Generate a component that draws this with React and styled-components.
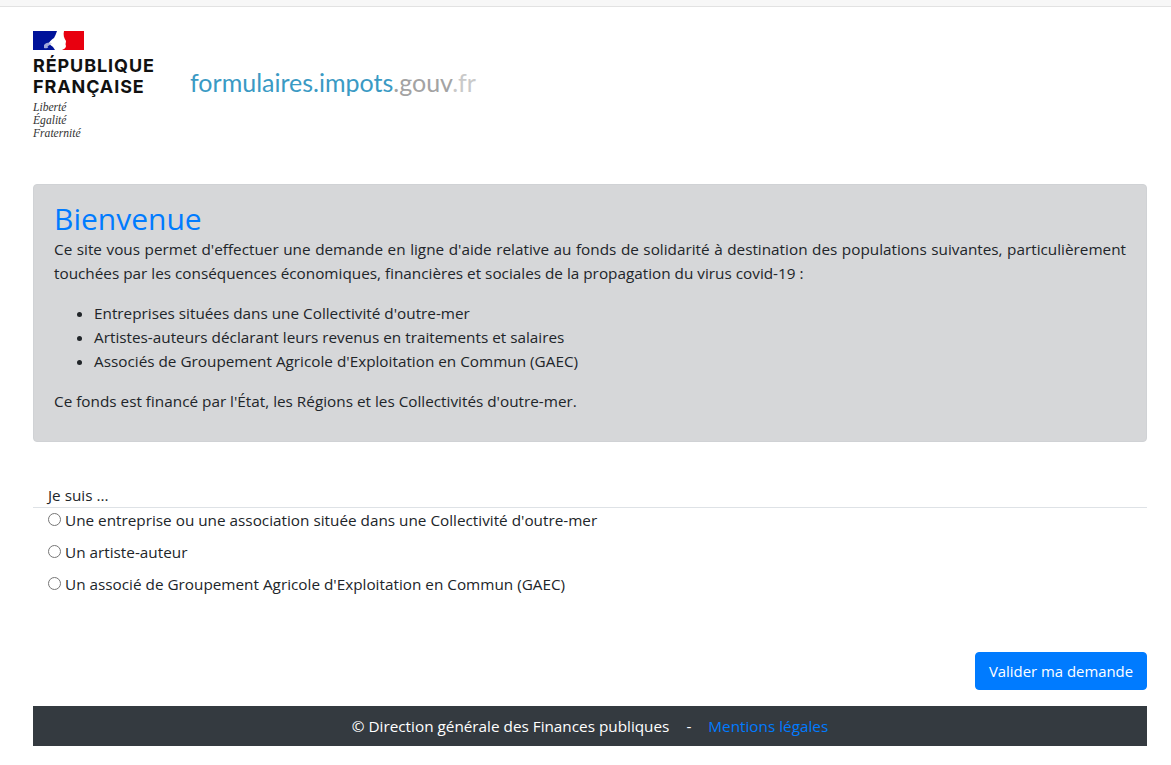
import React from 'react'
import styled, { createGlobalStyle } from 'styled-components'

const GlobalStyle = createGlobalStyle`
  * {
    box-sizing: border-box;
  }
  body {
    margin: 0;
    background: #fff;
    color: #212529;
    font-family: 'Open Sans', 'Noto Sans', sans-serif;
    font-size: 15.3px;
  }
`

const Flag = () => (
  <svg width='52' height='20' viewBox='0 0 52 20'>
    <path d='M0 0 H24 C23 3 22 5 21 7 C19 8 17 10 16 12 C17 14 19 15 20 16 L22 19 H0 Z' fill='#00129a' />
    <path d='M31 0 H51 V19 H29 C31 18 33 17 33 15 C32 13 33 12 33 10 C31 7 30 4 31 0 Z' fill='#e8000f' />
    <path
      d='M11 14 C14 11 18 11 19 13 C17 13 17 15 14 15 C17 16 14 18 11 17 Z'
      fill='#c9cdea'
      opacity='0.8'
    />
  </svg>
)

const App = () => {
  return (
    <>
      <GlobalStyle />
      <TopStrip />
      <Page>
        <Header>
          <Logo>
            <Flag />
            <LogoName>
              RÉPUBLIQUE
              <br />
              FRANÇAISE
            </LogoName>
            <Motto>
              Liberté
              <br />
              Égalité
              <br />
              Fraternité
            </Motto>
          </Logo>
          <SiteName>
            formulaires.impots<span>.gouv</span>
            <em>.fr</em>
          </SiteName>
        </Header>

        <Welcome>
          <h1>Bienvenue</h1>
          <Intro>
            Ce site vous permet d'effectuer une demande en ligne d'aide relative au fonds de
            solidarité à destination des populations suivantes, particulièrement touchées par les
            conséquences économiques, financières et sociales de la propagation du virus covid-19 :
          </Intro>
          <ul>
            <li>Entreprises situées dans une Collectivité d'outre-mer</li>
            <li>Artistes-auteurs déclarant leurs revenus en traitements et salaires</li>
            <li>Associés de Groupement Agricole d'Exploitation en Commun (GAEC)</li>
          </ul>
          <p>Ce fonds est financé par l'État, les Régions et les Collectivités d'outre-mer.</p>
        </Welcome>

        <Form>
          <Legend>Je suis ...</Legend>
          <Choice>
            <input type='radio' name='profil' />
            Une entreprise ou une association située dans une Collectivité d'outre-mer
          </Choice>
          <Choice>
            <input type='radio' name='profil' />
            Un artiste-auteur
          </Choice>
          <Choice>
            <input type='radio' name='profil' />
            Un associé de Groupement Agricole d'Exploitation en Commun (GAEC)
          </Choice>
          <Actions>
            <Submit type='button'>Valider ma demande</Submit>
          </Actions>
        </Form>

        <Footer>
          © Direction générale des Finances publiques
          <span>-</span>
          <a href='#mentions'>Mentions légales</a>
        </Footer>
      </Page>
    </>
  )
}

const TopStrip = styled.div`
  height: 7px;
  background: #f7f7f7;
  border-bottom: 1px solid #e2e2e2;
`

const Page = styled.main`
  padding: 24px 24px 0 33px;
`

const Header = styled.header`
  display: flex;
  align-items: flex-start;
  gap: 34px;
  height: 153px;
`

const Logo = styled.div`
  width: 123px;
  line-height: 0;
`

const LogoName = styled.div`
  margin-top: 4px;
  font-family: 'Inter', sans-serif;
  font-weight: 700;
  font-size: 18px;
  letter-spacing: 0.9px;
  line-height: 21px;
  white-space: nowrap;
  color: #111;
`

const Motto = styled.div`
  margin-top: 4px;
  font-family: 'Liberation Serif', serif;
  font-style: italic;
  font-size: 11.6px;
  line-height: 13px;
  color: #333;
`

const SiteName = styled.div`
  margin-top: 35px;
  font-family: 'Lato', sans-serif;
  font-size: 25px;
  line-height: 32px;
  color: #3a9ac4;

  span {
    color: #a3a3a3;
  }
  em {
    font-style: normal;
    color: #c9c9c9;
  }
`

const Welcome = styled.section`
  height: 258px;
  padding: 16px 20px 0 20px;
  background: #d6d7d9;
  border: 1px solid #d0d2d5;
  border-radius: 4px;
  line-height: 24px;

  h1 {
    margin: 0;
    font-size: 30px;
    font-weight: 400;
    line-height: 36px;
    color: #007bff;
  }
  ul {
    margin: 16px 0 16px;
    padding-left: 40px;
  }
  p {
    margin: 0;
  }
`

const Intro = styled.p`
  && {
    text-align: justify;
  }
`

const Form = styled.form`
  margin-top: 41px;
`

const Legend = styled.div`
  padding-left: 15px;
  line-height: 24px;
  border-bottom: 1px solid #dee2e6;
`

const Choice = styled.label`
  display: flex;
  align-items: center;
  height: 24px;
  margin-bottom: 8px;
  padding-left: 15px;

  input {
    width: 13px;
    height: 13px;
    margin: 0 4px 2px 0;
  }
`

const Actions = styled.div`
  display: flex;
  justify-content: flex-end;
  margin-top: 56px;
`

const Submit = styled.button`
  width: 172px;
  height: 38px;
  padding: 0;
  background: #007bff;
  border: 1px solid #007bff;
  border-radius: 4px;
  color: #fff;
  font-family: inherit;
  font-size: 14.9px;
`

const Footer = styled.footer`
  display: flex;
  justify-content: center;
  align-items: center;
  height: 40px;
  margin-top: 16px;
  background: #343a40;
  color: #fff;

  span {
    margin: 0 17px;
  }
  a {
    color: #007bff;
    text-decoration: none;
  }
`

export default App
